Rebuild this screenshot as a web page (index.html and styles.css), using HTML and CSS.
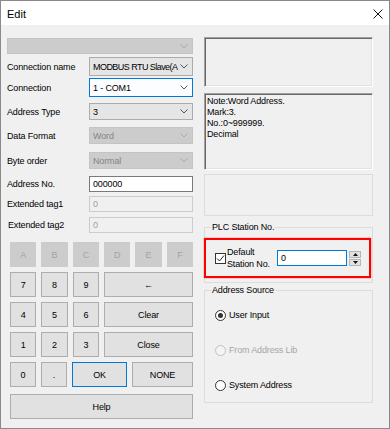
FILE: index.html
```html
<!DOCTYPE html>
<html lang="en">
<head>
    <meta charset="UTF-8">
    <title>Edit</title>
    <link rel="stylesheet" href="styles.css">
</head>
<body>

<div class="window">
    <!-- Title bar -->
    <div class="titlebar">
        <span class="title">Edit</span>
        <svg class="close" width="10" height="10" viewBox="0 0 10 10">
            <path d="M0.5 0.5 L9.5 9.5 M9.5 0.5 L0.5 9.5" stroke="#111" stroke-width="1" fill="none"/>
        </svg>
    </div>

    <div class="client">
        <!-- Left column: address form and keypad -->
        <div class="left">
            <div class="combo disabled wide">
                <span></span>
                <svg class="chev" width="8" height="5" viewBox="0 0 8 5"><polyline points="0.5,0.5 4,4 7.5,0.5"/></svg>
            </div>

            <div class="field mt3 h19">
                <label>Connection name</label>
                <div class="combo">
                    <span class="tight">MODBUS RTU Slave(A</span>
                    <svg class="chev" width="8" height="5" viewBox="0 0 8 5"><polyline points="0.5,0.5 4,4 7.5,0.5"/></svg>
                </div>
            </div>
            <div class="field mt2 h19">
                <label>Connection</label>
                <div class="combo focused">
                    <span>1 - COM1</span>
                    <svg class="chev" width="8" height="5" viewBox="0 0 8 5"><polyline points="0.5,0.5 4,4 7.5,0.5"/></svg>
                </div>
            </div>
            <div class="field mt6 h17">
                <label>Address Type</label>
                <div class="combo">
                    <span>3</span>
                    <svg class="chev" width="8" height="5" viewBox="0 0 8 5"><polyline points="0.5,0.5 4,4 7.5,0.5"/></svg>
                </div>
            </div>
            <div class="field mt7 h17">
                <label>Data Format</label>
                <div class="combo disabled">
                    <span>Word</span>
                    <svg class="chev" width="8" height="5" viewBox="0 0 8 5"><polyline points="0.5,0.5 4,4 7.5,0.5"/></svg>
                </div>
            </div>
            <div class="field mt8 h17">
                <label>Byte order</label>
                <div class="combo disabled">
                    <span>Normal</span>
                    <svg class="chev" width="8" height="5" viewBox="0 0 8 5"><polyline points="0.5,0.5 4,4 7.5,0.5"/></svg>
                </div>
            </div>
            <div class="field mt7 h16">
                <label>Address No.</label>
                <div class="textbox">000000</div>
            </div>
            <div class="field mt4 h16">
                <label>Extended tag1</label>
                <div class="textbox disabled">0</div>
            </div>
            <div class="field mt5 h16">
                <label class="indent">Extended tag2</label>
                <div class="textbox disabled">0</div>
            </div>

            <!-- Keypad -->
            <div class="keypad">
                <button class="key" disabled>A</button>
                <button class="key" disabled>B</button>
                <button class="key" disabled>C</button>
                <button class="key" disabled>D</button>
                <button class="key" disabled>E</button>
                <button class="key" disabled>F</button>

                <button class="key">7</button>
                <button class="key">8</button>
                <button class="key">9</button>
                <button class="key span3">&larr;</button>

                <button class="key">4</button>
                <button class="key">5</button>
                <button class="key">6</button>
                <button class="key span3">Clear</button>

                <button class="key">1</button>
                <button class="key">2</button>
                <button class="key">3</button>
                <button class="key span3">Close</button>

                <div class="keyrow-last">
                    <button class="key">0</button>
                    <button class="key">.</button>
                    <button class="key default">OK</button>
                    <button class="key">NONE</button>
                </div>
            </div>
            <button class="key help">Help</button>
        </div>

        <!-- Right column: info panels and options -->
        <div class="right">
            <div class="sunken box-top"></div>
            <div class="sunken box-note">
                Note:Word Address.<br>
                Mark:3.<br>
                No.:0~999999.<br>
                Decimal
            </div>
            <div class="flat-box"></div>

            <fieldset class="group plc">
                <legend>PLC Station No.</legend>
                <div class="highlight">
                    <span class="checkbox">
                        <svg width="9" height="9" viewBox="0 0 9 9"><polyline points="1,4.5 3.5,7 8,1.5" fill="none" stroke="#222" stroke-width="1"/></svg>
                    </span>
                    <span class="check-label">Default<br>Station No.</span>
                    <div class="textbox focused station">0</div>
                    <div class="spinner">
                        <span class="spin"><svg width="5" height="3" viewBox="0 0 5 3"><polygon points="0,3 2.5,0 5,3"/></svg></span>
                        <span class="spin"><svg width="5" height="3" viewBox="0 0 5 3"><polygon points="0,0 5,0 2.5,3"/></svg></span>
                    </div>
                </div>
            </fieldset>

            <fieldset class="group source">
                <legend>Address Source</legend>
                <div class="radio-row">
                    <span class="radio checked"></span>
                    <span>User Input</span>
                </div>
                <div class="radio-row disabled">
                    <span class="radio"></span>
                    <span>From Address Lib</span>
                </div>
                <div class="radio-row">
                    <span class="radio"></span>
                    <span>System Address</span>
                </div>
            </fieldset>
        </div>
    </div>
</div>

</body>
</html>
```

FILE: styles.css
```css
* {
    margin: 0;
    padding: 0;
    box-sizing: border-box;
}

body {
    font-family: "Liberation Sans", Arial, sans-serif;
    font-size: 9px;
    letter-spacing: -0.15px;
    color: #000;
    background: #fff;
}

.window {
    width: 390px;
    height: 429px;
    border: 1px solid #8a8a8a;
    background: #f0f0f0;
    display: flex;
    flex-direction: column;
}

/* Title bar */
.titlebar {
    height: 24px;
    background: #fff;
    display: flex;
    align-items: center;
    justify-content: space-between;
    padding: 0 6px;
}

.title {
    font-size: 11px;
    letter-spacing: 0;
    padding-top: 1px;
}

.close {
    margin-top: 1px;
}

.client {
    flex: 1;
    display: flex;
    gap: 11px;
    padding-left: 6px;
}

/* Left column */
.left {
    width: 186px;
    padding-top: 13px;
    display: flex;
    flex-direction: column;
}

.field {
    display: flex;
    align-items: center;
}

.field label {
    width: 82px;
    flex: none;
}

.field label.indent {
    padding-left: 1px;
}

.mt2 { margin-top: 2px; }
.mt3 { margin-top: 3px; }
.mt4 { margin-top: 4px; }
.mt5 { margin-top: 5px; }
.mt6 { margin-top: 6px; }
.mt7 { margin-top: 7px; }
.mt8 { margin-top: 8px; }

.h16 { height: 16px; }
.h17 { height: 17px; }
.h19 { height: 19px; }

.combo {
    width: 104px;
    height: 100%;
    display: flex;
    align-items: center;
    gap: 2px;
    padding: 0 4px 0 3px;
    background: #e5e5e5;
    border: 1px solid #acacac;
}

.combo span {
    flex: 1;
    white-space: nowrap;
    overflow: hidden;
}

.combo span.tight {
    letter-spacing: -0.55px;
}

.combo .chev {
    flex: none;
}

.combo .chev polyline {
    fill: none;
    stroke: #555;
    stroke-width: 1;
}

.combo.focused {
    background: #fbfdff;
    border-color: #0078d7;
}

.combo.disabled {
    background: #cccccc;
    border-color: #c4c4c4;
    color: #858585;
}

.combo.disabled .chev polyline {
    stroke: #a8a8a8;
}

.combo.wide {
    width: 186px;
    height: 16px;
}

.textbox {
    width: 104px;
    height: 100%;
    display: flex;
    align-items: center;
    padding-left: 3px;
    background: #fff;
    border: 1px solid #7a7a7a;
}

.textbox.disabled {
    background: #f0f0f0;
    border-color: #cccccc;
    color: #a0a0a0;
}

.textbox.focused {
    border-color: #0078d7;
}

/* Keypad */
.keypad {
    margin: 9px 0 0 3px;
    width: 183px;
    display: grid;
    grid-template-columns: repeat(6, 1fr);
    grid-auto-rows: 25px;
    gap: 5px;
}

.key {
    font-family: "Liberation Sans", Arial, sans-serif;
    font-size: 9px;
    letter-spacing: -0.15px;
    color: #000;
    background: #e1e1e1;
    border: 1px solid #adadad;
}

.key:disabled {
    background: #cccccc;
    border-color: #cccccc;
    color: #a3a3a3;
}

.key.span3 {
    grid-column: span 3;
}

.key.default {
    border-color: #0078d7;
}

.keyrow-last {
    grid-column: 1 / -1;
    display: grid;
    grid-template-columns: 26px 26px 55px 1fr;
    gap: 5px;
}

.help {
    margin: 7px 0 0 3px;
    width: 183px;
    height: 25px;
}

/* Right column */
.right {
    width: 169px;
    padding-top: 12px;
    display: flex;
    flex-direction: column;
}

.sunken {
    border-top: 1px solid #a0a0a0;
    border-left: 1px solid #a0a0a0;
    border-right: 1px solid #fff;
    border-bottom: 1px solid #fff;
    box-shadow: inset 1px 1px 0 #696969, inset -1px -1px 0 #e3e3e3;
}

.box-top {
    height: 50px;
}

.box-note {
    margin-top: 6px;
    height: 77px;
    padding: 2px 0 0 2px;
    line-height: 11px;
}

.flat-box {
    margin-top: 4px;
    height: 42px;
    border: 1px solid #dcdcdc;
}

.group {
    border: 1px solid #dcdcdc;
}

.group legend {
    margin-left: 6px;
    padding: 0 1px;
    line-height: 11px;
}

.plc {
    margin-top: 6px;
    padding-bottom: 4px;
}

.highlight {
    margin: 5px 0 0 -1px;
    width: 167px;
    height: 40px;
    border: 2px solid #ff0000;
    box-shadow: 0 0 1px #ff2020;
    display: flex;
    align-items: center;
    padding-left: 9px;
}

.checkbox {
    width: 11px;
    height: 11px;
    border: 1px solid #333;
    background: #fff;
    display: flex;
    align-items: center;
    justify-content: center;
    flex: none;
}

.check-label {
    width: 50px;
    margin-left: 1px;
    line-height: 12px;
}

.textbox.station {
    width: 70px;
    height: 16px;
}

.spinner {
    margin-left: 2px;
    width: 12px;
    height: 15px;
    display: flex;
    flex-direction: column;
    gap: 1px;
}

.spin {
    flex: 1;
    background: #e1e1e1;
    border: 1px solid #b5b5b5;
    display: flex;
    align-items: center;
    justify-content: center;
}

.spin polygon {
    fill: #111;
}

.source {
    margin-top: 2px;
    height: 118px;
    padding-top: 13px;
    display: flex;
    flex-direction: column;
    gap: 23px;
}

.radio-row {
    height: 12px;
    padding-left: 10px;
    display: flex;
    align-items: center;
    gap: 3px;
}

.radio {
    width: 11px;
    height: 11px;
    border-radius: 50%;
    border: 1px solid #333;
    background: #fff;
    display: flex;
    align-items: center;
    justify-content: center;
}

.radio.checked::after {
    content: "";
    width: 5px;
    height: 5px;
    border-radius: 50%;
    background: #333;
}

.radio-row.disabled {
    color: #a6a6a6;
}

.radio-row.disabled .radio {
    border-color: #c2c2c2;
    background: #f4f4f4;
}
```
